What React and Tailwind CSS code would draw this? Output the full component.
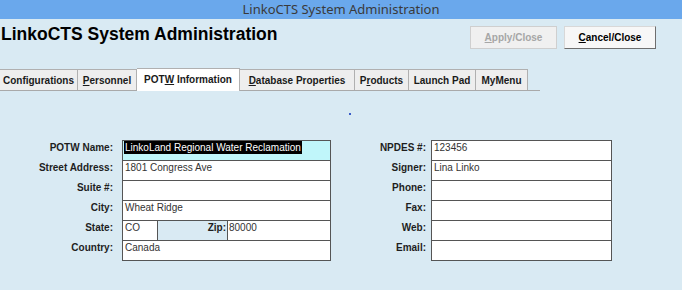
import React from "react";

const leftRows = [
	{ label: "POTW Name:", value: "LinkoLand Regional Water Reclamation", selected: true },
	{ label: "Street Address:", value: "1801 Congress Ave" },
	{ label: "Suite #:", value: "" },
	{ label: "City:", value: "Wheat Ridge" },
	{ label: "State:", state: true },
	{ label: "Country:", value: "Canada" },
];

const rightRows = [
	{ label: "NPDES #:", value: "123456" },
	{ label: "Signer:", value: "Lina Linko" },
	{ label: "Phone:", value: "" },
	{ label: "Fax:", value: "" },
	{ label: "Web:", value: "" },
	{ label: "Email:", value: "" },
];

const tabs = [
	{ w: "w-[78px]", text: <>Configurations</> },
	{ w: "w-[59px]", text: <><u>P</u>ersonnel</> },
	{ w: "w-[103px]", text: <>POT<u>W</u> Information</>, active: true },
	{ w: "w-[115px]", text: <><u>D</u>atabase Properties</> },
	{ w: "w-[54px]", text: <>P<u>r</u>oducts</> },
	{ w: "w-[67px]", text: <>Launch Pad</> },
	{ w: "w-[52px]", text: <>MyMenu</> },
];

function FieldBlock({ rows, labelW, fieldW, gap }) {
	return (
		<div className={`flex ${gap}`}>
			<div className={`flex flex-col ${labelW}`}>
				{rows.map((r) => (
					<div
						key={r.label}
						className="h-[20px] flex items-start justify-end pt-[2px] text-[10px] font-bold leading-[12px] text-[#1e1e1e]">
						{r.label}
					</div>
				))}
			</div>
			<div className={`flex flex-col border-t border-l border-r border-[#555] ${fieldW}`}>
				{rows.map((r) =>
					r.state ? (
						<div key={r.label} className="h-[20px] flex border-b border-[#555]">
							<div className="w-[35px] bg-white border-r border-[#555] pl-[2px] text-[10px] leading-[14px] text-[#333]">
								CO
							</div>
							<div className="w-[70px] border-r border-[#555] pr-[1px] text-right text-[10px] font-bold leading-[14px] text-[#1e1e1e]">
								Zip:
							</div>
							<div className="flex-1 bg-white pl-[1px] text-[10px] leading-[14px] text-[#333]">
								80000
							</div>
						</div>
					) : (
						<div
							key={r.label}
							className={`h-[20px] border-b border-[#555] pl-[1px] text-[10px] leading-[14px] text-[#333] ${
								r.selected ? "bg-[#c0f6fa]" : "bg-white"
							}`}>
							{r.selected ? (
								<span className="bg-black text-white px-[1px] inline-block leading-[13px]">{r.value}</span>
							) : (
								<span className="pl-[1px]">{r.value}</span>
							)}
						</div>
					)
				)}
			</div>
		</div>
	);
}

export default function App() {
	return (
		<div className="w-[682px] h-[290px] overflow-hidden bg-[#d9eaf3] font-['Liberation_Sans',Arial,sans-serif]">
			{/* Window title */}
			<div className="h-[19px] bg-[#6aa8ec] flex items-center justify-center text-[13px] text-[#3a3a3a] font-['Noto_Sans',sans-serif]">
				LinkoCTS System Administration
			</div>

			{/* Header */}
			<div className="flex items-start">
				<h1 className="mt-[4px] ml-[1px] text-[17.5px] leading-[22px] font-bold text-black">
					LinkoCTS System Administration
				</h1>
				<div className="ml-auto mr-[26px] mt-[7px] flex gap-[7px]">
					<button
						type="button"
						className="w-[87px] h-[23px] bg-[#f0f0f0] border border-[#cfcfcf] text-[10px] font-bold text-[#a6a6a6]">
						<u>A</u>pply/Close
					</button>
					<button
						type="button"
						className="w-[92px] h-[23px] bg-[#f7f7f7] border border-[#d8d8d8] border-r-[#6e6e6e] border-b-[#6e6e6e] text-[10px] font-bold text-black">
						<u>C</u>ancel/Close
					</button>
				</div>
			</div>

			{/* Tabs */}
			<div className="mt-[19px] w-[540px] h-[23px] flex items-end border-b border-[#a9a9a9]">
				{tabs.map((t, i) => (
					<div
						key={i}
						className={`${t.w} flex items-center justify-center text-[10px] font-bold text-[#1a1a1a] border-r border-t border-[#b0b0b0] ${
							t.active ? "h-[23px] bg-white -mb-[1px] pb-[2px]" : "h-[21px] bg-[#eeeeee]"
						}`}>
						<span>{t.text}</span>
					</div>
				))}
			</div>

			{/* Spacer with marker */}
			<div className="h-[49px] pt-[22px]">
				<div className="ml-[349px] w-[2px] h-[2px] bg-[#3a5cc8]"></div>
			</div>

			{/* Form */}
			<div className="flex">
				<FieldBlock rows={leftRows} labelW="w-[113px]" fieldW="w-[209px]" gap="gap-[9px]" />
				<div className="ml-[5px]">
					<FieldBlock rows={rightRows} labelW="w-[90px]" fieldW="w-[181px]" gap="gap-[5px]" />
				</div>
			</div>
		</div>
	);
}
